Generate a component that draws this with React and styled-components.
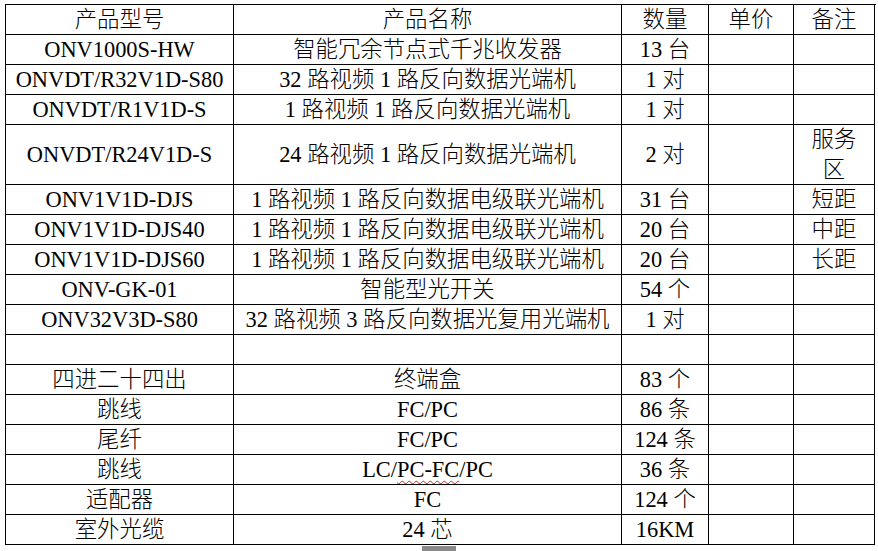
import React from 'react';
import styled, { createGlobalStyle } from 'styled-components';

const GlobalStyle = createGlobalStyle`
  html, body {
    margin: 0;
    padding: 0;
    background: #fff;
  }
  body {
    font-family: "Liberation Serif", "Noto Sans CJK SC", serif;
    color: #000;
  }
`;

const Page = styled.div`
  padding: 4px 0 0 5px;
  width: 878px;
  box-sizing: border-box;
`;

// Word-style table: outer left/top border, each cell draws right/bottom
const Grid = styled.div`
  display: grid;
  grid-template-columns: 228px 388px 87px 85px 81px;
  grid-auto-rows: 30px;
  width: 870px;
  border-left: 1px solid #000;
  border-top: 1px solid #000;
  font-size: 22.4px;
  font-weight: 300;
`;

const Cell = styled.div`
  box-sizing: border-box;
  border-right: 1px solid #000;
  border-bottom: 1px solid #000;
  display: flex;
  flex-direction: column;
  align-items: center;
  justify-content: center;
  text-align: center;
  line-height: 30px;
  white-space: nowrap;
  overflow: hidden;
  grid-row: span ${p => (p.$tall ? 2 : 1)};
`;

const Typo = styled.span`
  text-decoration: underline wavy #d42020;
  text-decoration-thickness: 1.2px;
  text-underline-offset: 3px;
`;

const Handle = styled.div`
  width: 34px;
  height: 6px;
  margin: 1px 0 0 417px;
  background: #8a8a8a;
`;

const rows = [
  ['产品型号', '产品名称', '数量', '单价', '备注'],
  ['ONV1000S-HW', '智能冗余节点式千兆收发器', '13 台', '', ''],
  ['ONVDT/R32V1D-S80', '32 路视频 1 路反向数据光端机', '1 对', '', ''],
  ['ONVDT/R1V1D-S', '1 路视频 1 路反向数据光端机', '1 对', '', ''],
  ['ONVDT/R24V1D-S', '24 路视频 1 路反向数据光端机', '2 对', '', 'tall'],
  ['ONV1V1D-DJS', '1 路视频 1 路反向数据电级联光端机', '31 台', '', '短距'],
  ['ONV1V1D-DJS40', '1 路视频 1 路反向数据电级联光端机', '20 台', '', '中距'],
  ['ONV1V1D-DJS60', '1 路视频 1 路反向数据电级联光端机', '20 台', '', '长距'],
  ['ONV-GK-01', '智能型光开关', '54 个', '', ''],
  ['ONV32V3D-S80', '32 路视频 3 路反向数据光复用光端机', '1 对', '', ''],
  ['', '', '', '', ''],
  ['四进二十四出', '终端盒', '83 个', '', ''],
  ['跳线', 'FC/PC', '86 条', '', ''],
  ['尾纤', 'FC/PC', '124 条', '', ''],
  ['跳线', 'typo', '36 条', '', ''],
  ['适配器', 'FC', '124 个', '', ''],
  ['室外光缆', '24 芯', '16KM', '', ''],
];

const renderName = name =>
  name === 'typo' ? (
    <span>
      LC/<Typo>PC-FC</Typo>/PC
    </span>
  ) : (
    name
  );

const App = () => {
  return (
    <Page>
      <GlobalStyle />
      <Grid>
        {rows.map((r, i) => {
          const tall = r[4] === 'tall';
          return (
            <React.Fragment key={i}>
              <Cell $tall={tall}>{r[0]}</Cell>
              <Cell $tall={tall}>{renderName(r[1])}</Cell>
              <Cell $tall={tall}>{r[2]}</Cell>
              <Cell $tall={tall}>{r[3]}</Cell>
              <Cell $tall={tall}>
                {tall ? (
                  <>
                    <span>服务</span>
                    <span>区</span>
                  </>
                ) : (
                  r[4]
                )}
              </Cell>
            </React.Fragment>
          );
        })}
      </Grid>
      <Handle />
    </Page>
  );
};

export default App;
